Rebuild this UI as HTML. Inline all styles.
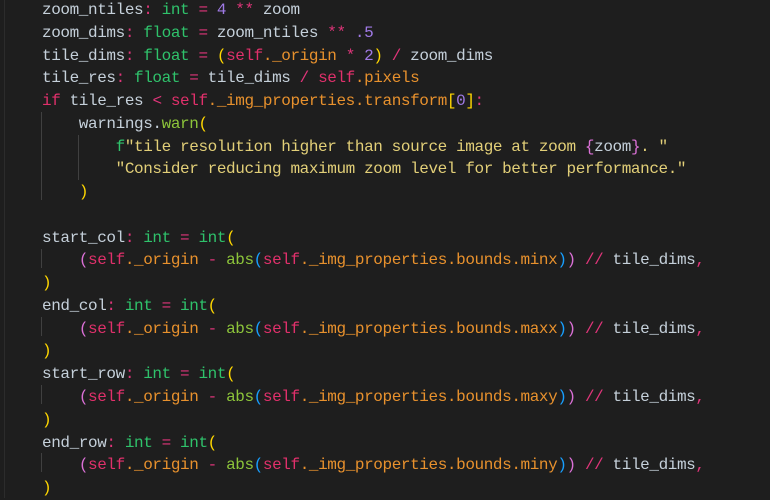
<!DOCTYPE html>
<html><head><meta charset="utf-8"><style>
html,body{margin:0;padding:0;background:#1e1e1e;width:770px;height:498px;overflow:hidden}
.c{position:absolute;left:42px;top:-1px;font-family:"Liberation Mono",monospace;font-size:16px;letter-spacing:-0.4px;line-height:22.76px;color:#c5d0da;white-space:pre}
.g{position:absolute;width:1px;background:#404040}
.t{color:#2fc26b}.o{color:#e0357a}.n{color:#a07ae6}.s{color:#e0306b}.a{color:#e8912d}
.str{color:#e2cf78}.y{color:#ffd700}.p{color:#da70d6}.b{color:#179fff}.f{color:#8cc43a}
</style></head><body>
<div class="g" style="left:4px;top:0;height:498px;background:#2c2c2c"></div>
<div class="g" style="left:41px;top:112px;height:88px"></div>
<div class="g" style="left:78px;top:135px;height:45px"></div>
<div class="g" style="left:41px;top:249px;height:19px"></div>
<div class="g" style="left:41px;top:317px;height:19px"></div>
<div class="g" style="left:41px;top:385px;height:19px"></div>
<div class="g" style="left:41px;top:453px;height:19px"></div>
<div class="c">zoom_ntiles<span class="o">:</span> <span class="t">int</span> <span class="o">=</span> <span class="n">4</span> <span class="o">**</span> zoom
zoom_dims<span class="o">:</span> <span class="t">float</span> <span class="o">=</span> zoom_ntiles <span class="o">**</span> <span class="n">.5</span>
tile_dims<span class="o">:</span> <span class="t">float</span> <span class="o">=</span> <span class="y">(</span><span class="s">self</span><span class="a">._origin</span> <span class="o">*</span> <span class="n">2</span><span class="y">)</span> <span class="o">/</span> zoom_dims
tile_res<span class="o">:</span> <span class="t">float</span> <span class="o">=</span> tile_dims <span class="o">/</span> <span class="s">self</span><span class="a">.pixels</span>
<span class="s">if</span> tile_res <span class="o">&lt;</span> <span class="s">self</span><span class="a">._img_properties.transform</span><span class="y">[</span><span class="n">0</span><span class="y">]</span><span class="o">:</span>
    warnings.<span class="f">warn</span><span class="y">(</span>
        <span class="t">f</span><span class="str">"tile resolution higher than source image at zoom </span><span class="p">{</span>zoom<span class="p">}</span><span class="str">. "</span>
        <span class="str">"Consider reducing maximum zoom level for better performance."</span>
    <span class="y">)</span>

start_col<span class="o">:</span> <span class="t">int</span> <span class="o">=</span> <span class="t">int</span><span class="y">(</span>
    <span class="p">(</span><span class="s">self</span><span class="a">._origin</span> <span class="o">-</span> <span class="f">abs</span><span class="b">(</span><span class="s">self</span><span class="a">._img_properties.bounds.minx</span><span class="b">)</span><span class="p">)</span> <span class="o">//</span> tile_dims<span class="o">,</span>
<span class="y">)</span>
end_col<span class="o">:</span> <span class="t">int</span> <span class="o">=</span> <span class="t">int</span><span class="y">(</span>
    <span class="p">(</span><span class="s">self</span><span class="a">._origin</span> <span class="o">-</span> <span class="f">abs</span><span class="b">(</span><span class="s">self</span><span class="a">._img_properties.bounds.maxx</span><span class="b">)</span><span class="p">)</span> <span class="o">//</span> tile_dims<span class="o">,</span>
<span class="y">)</span>
start_row<span class="o">:</span> <span class="t">int</span> <span class="o">=</span> <span class="t">int</span><span class="y">(</span>
    <span class="p">(</span><span class="s">self</span><span class="a">._origin</span> <span class="o">-</span> <span class="f">abs</span><span class="b">(</span><span class="s">self</span><span class="a">._img_properties.bounds.maxy</span><span class="b">)</span><span class="p">)</span> <span class="o">//</span> tile_dims<span class="o">,</span>
<span class="y">)</span>
end_row<span class="o">:</span> <span class="t">int</span> <span class="o">=</span> <span class="t">int</span><span class="y">(</span>
    <span class="p">(</span><span class="s">self</span><span class="a">._origin</span> <span class="o">-</span> <span class="f">abs</span><span class="b">(</span><span class="s">self</span><span class="a">._img_properties.bounds.miny</span><span class="b">)</span><span class="p">)</span> <span class="o">//</span> tile_dims<span class="o">,</span>
<span class="y">)</span></div>
</body></html>
